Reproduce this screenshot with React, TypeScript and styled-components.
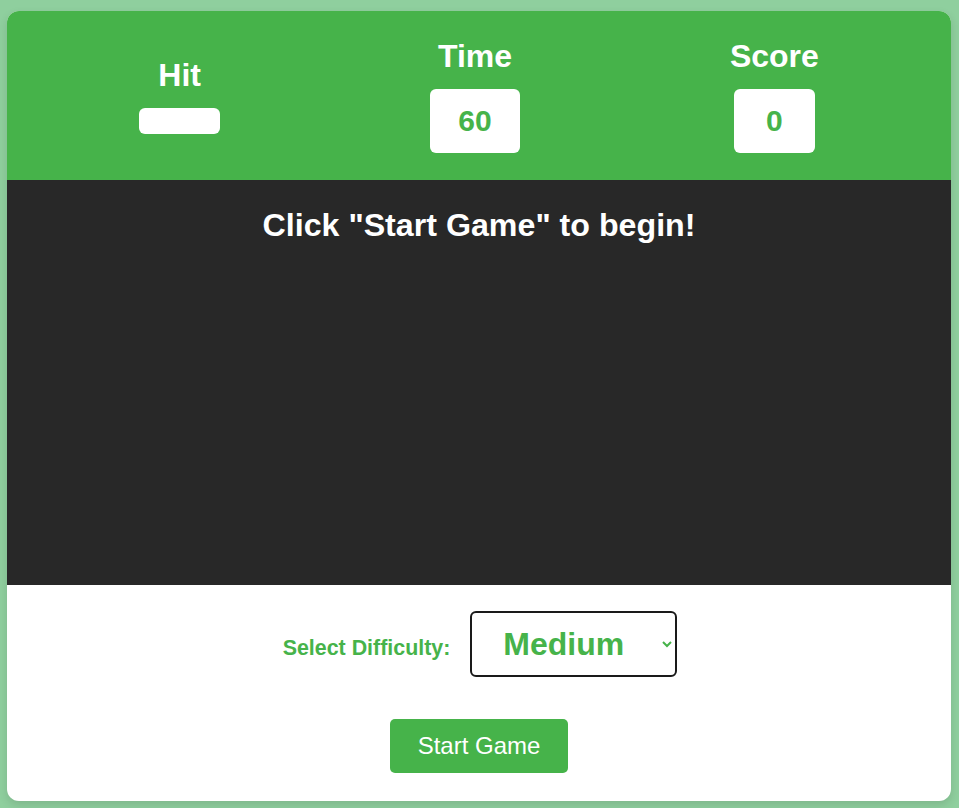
import React from "react";
import styled, { createGlobalStyle } from "styled-components";

const GREEN = "#46b34a";

const GlobalStyle = createGlobalStyle`
  html, body {
    margin: 0;
    padding: 0;
    background: #8fcf9e;
    font-family: "Liberation Sans", Arial, sans-serif;
  }
  body {
    padding: 11px 8px 7px 7px;
  }
`;

const Card = styled.div`
  width: 944px;
  background: #ffffff;
  border-radius: 12px;
  overflow: hidden;
  box-shadow: 0 4px 10px rgba(0, 0, 0, 0.12);
`;

const Header = styled.div`
  display: flex;
  justify-content: space-around;
  align-items: center;
  background: ${GREEN};
  padding: 27px 27px 27px 27px;
`;

const Stat = styled.div`
  display: flex;
  flex-direction: column;
  align-items: center;
`;

const StatLabel = styled.h2`
  margin: 0 0 14px;
  font-size: 32px;
  font-weight: bold;
  color: #ffffff;
`;

const StatValue = styled.div`
  box-sizing: border-box;
  min-width: 81px;
  padding: 13px 28px;
  background: #ffffff;
  border-radius: 6px;
  color: ${GREEN};
  font-size: 30px;
  font-weight: bold;
  line-height: 38px;
  text-align: center;
`;

const GameArea = styled.div`
  height: 405px;
  box-sizing: border-box;
  padding-top: 27px;
  background: #282828;
`;

const Message = styled.h2`
  margin: 0;
  font-size: 32.2px;
  font-weight: bold;
  color: #ffffff;
  text-align: center;
`;

const Controls = styled.div`
  display: flex;
  flex-direction: column;
  align-items: center;
  gap: 42px;
  padding: 26px 0 28px;
`;

const DifficultyRow = styled.div`
  display: flex;
  align-items: baseline;
  gap: 20px;
  margin-left: 2px;
`;

const DifficultyLabel = styled.label`
  font-size: 21.4px;
  font-weight: bold;
  color: ${GREEN};
`;

const DifficultySelect = styled.select`
  box-sizing: border-box;
  width: 207px;
  height: 66px;
  padding: 0 4px 0 27px;
  border: 2px solid #1a1a1a;
  border-radius: 6px;
  background: #ffffff;
  color: ${GREEN};
  font-family: "Liberation Sans", Arial, sans-serif;
  font-size: 32px;
  font-weight: bold;
`;

const StartButton = styled.button`
  padding: 13px 28px;
  border: none;
  border-radius: 5px;
  background: ${GREEN};
  color: #ffffff;
  font-family: "Liberation Sans", Arial, sans-serif;
  font-size: 24px;
  line-height: 28px;
  cursor: pointer;
`;

export default function App() {
  return (
    <>
      <GlobalStyle />
      <Card>
        <Header>
          <Stat>
            <StatLabel>Hit</StatLabel>
            <StatValue></StatValue>
          </Stat>
          <Stat>
            <StatLabel>Time</StatLabel>
            <StatValue>60</StatValue>
          </Stat>
          <Stat>
            <StatLabel>Score</StatLabel>
            <StatValue>0</StatValue>
          </Stat>
        </Header>
        <GameArea>
          <Message>Click "Start Game" to begin!</Message>
        </GameArea>
        <Controls>
          <DifficultyRow>
            <DifficultyLabel htmlFor="difficulty">Select Difficulty:</DifficultyLabel>
            <DifficultySelect id="difficulty" defaultValue="medium">
              <option value="easy">Easy</option>
              <option value="medium">Medium</option>
              <option value="hard">Hard</option>
            </DifficultySelect>
          </DifficultyRow>
          <StartButton>Start Game</StartButton>
        </Controls>
      </Card>
    </>
  );
}
